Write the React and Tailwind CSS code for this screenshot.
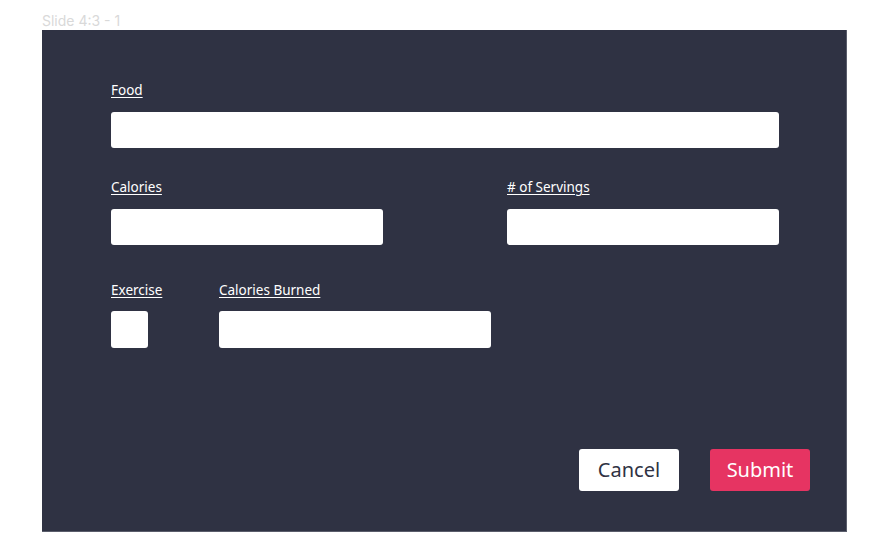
export default function App() {
  const label =
    "block whitespace-nowrap text-[13.5px] leading-4 text-white underline underline-offset-2 decoration-1";
  const input = "block h-9 w-full rounded-[3px] bg-white";

  return (
    <div
      className="w-[887px] h-[556px] bg-white pt-[11px]"
      style={{ fontFamily: '"Noto Sans", "Open Sans", sans-serif' }}
    >
      <div
        className="ml-[42px] h-[19px] text-[14px] leading-[19px] text-[#d9d9d9]"
        style={{ fontFamily: 'Inter, sans-serif' }}
      >
        Slide 4:3 - 1
      </div>
      <div className="ml-[42px] flex h-[502px] w-[805px] flex-col border-r border-b border-[#5a5d6b] bg-[#2f3243] pl-[69px] pr-[67px] pt-[52px]">
        {/* Food */}
        <div>
          <span className={label}>Food</span>
          <div className={`${input} mt-[14px]`} />
        </div>

        {/* Calories / servings */}
        <div className="mt-[31px] grid grid-cols-2 gap-[124px]">
          <div>
            <span className={label}>Calories</span>
            <div className={`${input} mt-[14px]`} />
          </div>
          <div>
            <span className={label}># of Servings</span>
            <div className={`${input} mt-[14px]`} />
          </div>
        </div>

        {/* Exercise */}
        <div className="mt-[37px] flex gap-[71px]">
          <div className="w-[37px]">
            <span className={label}>Exercise</span>
            <div className="mt-[13px] h-[37px] w-[37px] rounded-[3px] bg-white" />
          </div>
          <div className="w-[272px]">
            <span className={label}>Calories Burned</span>
            <div className={`${input} mt-[13px] h-[37px]`} />
          </div>
        </div>

        <div className="-mr-[31px] mt-auto mb-[40px] flex justify-end gap-[31px]">
          <button className="h-[42px] w-[100px] rounded-[3px] bg-white text-[20px] text-[#2f3243]">
            Cancel
          </button>
          <button className="h-[42px] w-[100px] rounded-[3px] bg-[#e63462] text-[20px] text-white">
            Submit
          </button>
        </div>
      </div>
    </div>
  );
}
